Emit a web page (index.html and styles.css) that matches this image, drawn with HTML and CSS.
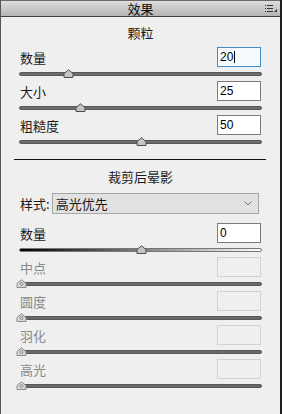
FILE: index.html
```html
<!DOCTYPE html>
<html lang="zh-CN">
<head>
  <meta charset="UTF-8">
  <title>效果</title>
  <link rel="stylesheet" href="styles.css">
</head>
<body>
<div class="panel">
  <div class="titleBar">
    <span class="titleText">效果</span>
    <svg class="menuIcon" width="12" height="8" viewBox="0 0 12 8">
      <rect x="0" y="0" width="1" height="1" fill="#333"/>
      <rect x="2" y="0" width="6" height="1" fill="#333"/>
      <rect x="0" y="3" width="1" height="1" fill="#333"/>
      <rect x="2" y="3" width="6" height="1" fill="#333"/>
      <rect x="0" y="6" width="1" height="1" fill="#333"/>
      <rect x="2" y="6" width="6" height="1" fill="#333"/>
      <path d="M12 4 L12 7 L9 7 Z" fill="#333"/>
    </svg>
  </div>
  <div class="center">
    <!-- 颗粒 -->
    <h2 class="groupTitle">颗粒</h2>
    <div class="row">
      <span class="label">数量</span>
      <span class="num focus">20<span class="caret"></span></span>
    </div>
    <div class="slider">
      <div class="track"></div>
      <svg class="thumb" style="left: 20%" width="11" height="9" viewBox="0 0 11 9"><path d="M1 8.5 V4.5 L5.5 0.8 L10 4.5 V8.5 Z"/></svg>
    </div>
    <div class="row">
      <span class="label">大小</span>
      <span class="num">25</span>
    </div>
    <div class="slider">
      <div class="track"></div>
      <svg class="thumb" style="left: 25%" width="11" height="9" viewBox="0 0 11 9"><path d="M1 8.5 V4.5 L5.5 0.8 L10 4.5 V8.5 Z"/></svg>
    </div>
    <div class="row">
      <span class="label">粗糙度</span>
      <span class="num">50</span>
    </div>
    <div class="slider">
      <div class="track"></div>
      <svg class="thumb" style="left: 50%" width="11" height="9" viewBox="0 0 11 9"><path d="M1 8.5 V4.5 L5.5 0.8 L10 4.5 V8.5 Z"/></svg>
    </div>

    <div class="line"></div>

    <!-- 裁剪后晕影 -->
    <h2 class="groupTitle">裁剪后晕影</h2>
    <div class="selectRow">
      <span class="label">样式:</span>
      <div class="select">
        <span>高光优先</span>
        <svg width="8" height="5" viewBox="0 0 8 5"><polyline points="0.5,0.5 4,4 7.5,0.5" fill="none" stroke="#777" stroke-width="1"/></svg>
      </div>
    </div>
    <div class="row amount">
      <span class="label">数量</span>
      <span class="num">0</span>
    </div>
    <div class="slider">
      <div class="track gradient"></div>
      <svg class="thumb" style="left: 50%" width="11" height="9" viewBox="0 0 11 9"><path d="M1 8.5 V4.5 L5.5 0.8 L10 4.5 V8.5 Z"/></svg>
    </div>
    <div class="row off">
      <span class="label">中点</span>
      <span class="num"></span>
    </div>
    <div class="slider off">
      <div class="track"></div>
      <svg class="thumb" style="left: 1%" width="11" height="9" viewBox="0 0 11 9"><path d="M1 8.5 V4.5 L5.5 0.8 L10 4.5 V8.5 Z"/><circle cx="5.5" cy="5" r="1.5"/></svg>
    </div>
    <div class="row off">
      <span class="label">圆度</span>
      <span class="num"></span>
    </div>
    <div class="slider off">
      <div class="track"></div>
      <svg class="thumb" style="left: 1%" width="11" height="9" viewBox="0 0 11 9"><path d="M1 8.5 V4.5 L5.5 0.8 L10 4.5 V8.5 Z"/><circle cx="5.5" cy="5" r="1.5"/></svg>
    </div>
    <div class="row off">
      <span class="label">羽化</span>
      <span class="num"></span>
    </div>
    <div class="slider off">
      <div class="track"></div>
      <svg class="thumb" style="left: 1%" width="11" height="9" viewBox="0 0 11 9"><path d="M1 8.5 V4.5 L5.5 0.8 L10 4.5 V8.5 Z"/><circle cx="5.5" cy="5" r="1.5"/></svg>
    </div>
    <div class="row off">
      <span class="label">高光</span>
      <span class="num"></span>
    </div>
    <div class="slider off">
      <div class="track"></div>
      <svg class="thumb" style="left: 1%" width="11" height="9" viewBox="0 0 11 9"><path d="M1 8.5 V4.5 L5.5 0.8 L10 4.5 V8.5 Z"/><circle cx="5.5" cy="5" r="1.5"/></svg>
    </div>
  </div>
</div>
</body>
</html>
```

FILE: styles.css
```css
*{
  margin: 0;
  padding: 0;
}
html,body{
  width: 100%;
  height: 100%;
  background-color: #efefef;
  font-family: "Noto Sans CJK SC", "Liberation Sans", sans-serif;
  color: #1a1a1a;
}
.panel{
  width: 282px;
  height: 414px;
  background-color: #efefef;
  border-left: 1px solid #555;
  border-right: 2px solid #1e1e1e;
  box-sizing: border-box;
}
/*标题栏*/
.titleBar{
  position: relative;
  height: 17px;
  border-top: 1px solid #6a6a6a;
  border-bottom: 1px solid #3e3e3e;
  background: linear-gradient(#dedede, #b4b4b4);
  box-sizing: border-box;
  text-align: center;
  font-size: 13px;
  line-height: 15px;
}
.titleText{
  color: #111;
}
.menuIcon{
  position: absolute;
  right: 3px;
  top: 4px;
}
/*内容*/
.center{
  padding: 7px 18px 0 18px;
}
.groupTitle{
  font-size: 13px;
  font-weight: normal;
  line-height: 18px;
  text-align: center;
  margin-bottom: 5px;
}
.row{
  display: flex;
  justify-content: space-between;
  align-items: center;
  height: 20px;
}
.label{
  font-size: 13px;
  padding-left: 1px;
}
.num{
  width: 44px;
  height: 20px;
  margin-right: 1px;
  border: 1px solid #7c7c7c;
  background-color: #fff;
  box-sizing: border-box;
  font-family: "Liberation Sans", sans-serif;
  font-size: 12px;
  line-height: 18px;
  padding-left: 2px;
  color: #000;
}
.focus{
  border-color: #3f8fc6;
  background-color: #f6fbff;
}
.caret{
  display: inline-block;
  width: 1px;
  height: 12px;
  background-color: #000;
  vertical-align: -2px;
  margin-left: 1px;
}
/*滑块*/
.slider{
  position: relative;
  height: 14px;
}
.track{
  position: absolute;
  left: 0;
  right: 0;
  top: 5px;
  height: 4px;
  background-color: #6e6e6e;
  border: 1px solid #585858;
  border-radius: 3px;
  box-sizing: border-box;
}
.gradient{
  background: linear-gradient(to right, #000, #fff);
  border-color: #777;
}
.thumb{
  position: absolute;
  top: 2px;
  margin-left: -5px;
}
.thumb path{
  fill: #c4c4c4;
  stroke: #4e4e4e;
  stroke-width: 1;
}
.slider.off .thumb path{
  fill: #dadada;
  stroke: #8a8a8a;
}
.slider.off .thumb circle{
  fill: none;
  stroke: #8a8a8a;
}
.slider.off .track{
  background-color: #6a6a6a;
}
.row.off .label{
  color: #8a8a8a;
}
.row.off .num{
  border-color: #d2d2d2;
  background-color: #efefef;
}
/*分割线*/
.line{
  height: 1px;
  background-color: #111;
  margin: 10px -4px 8px -5px;
}
/*下拉框*/
.selectRow{
  display: flex;
  align-items: center;
  margin-top: 7px;
}
.select{
  flex: 1;
  display: flex;
  justify-content: space-between;
  align-items: center;
  height: 21px;
  margin-left: 2px;
  margin-right: 3px;
  padding: 0 6px 0 3px;
  border: 1px solid #a6a6a6;
  background-color: #e2e2e2;
  box-sizing: border-box;
  font-size: 13px;
}
.amount{
  margin-top: 9px;
}
```
